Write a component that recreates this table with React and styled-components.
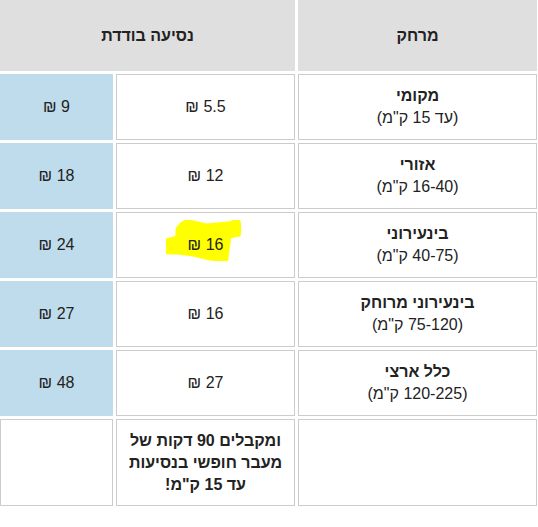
import React from "react";
import styled, { createGlobalStyle } from "styled-components";

const GlobalStyle = createGlobalStyle`
  body {
    margin: 0;
    background: #ffffff;
    font-family: "Liberation Sans", Arial, sans-serif;
    color: #222222;
  }
`;

const FareGrid = styled.div`
  direction: rtl;
  display: grid;
  width: 537px;
  grid-template-columns: 239px 179px 113px;
  grid-template-rows: 71px repeat(5, 66px) 87px;
  gap: 3px;
  font-size: 16px;
  line-height: 22px;
`;

const HeadCell = styled.div`
  grid-column: ${(props) => (props.wide ? "span 2" : "auto")};
  background: #dfdfdf;
  display: flex;
  align-items: center;
  justify-content: center;
  font-weight: bold;
`;

const Cell = styled.div`
  position: relative;
  box-sizing: border-box;
  display: flex;
  flex-direction: column;
  align-items: center;
  justify-content: center;
  text-align: center;
  padding: 0 8px;
  background: ${(props) => (props.blue ? "#bfdcec" : "#ffffff")};
  border: 1px solid ${(props) => (props.blue ? "#bfdcec" : "#cccccc")};
`;

const ZoneName = styled.span`
  font-weight: bold;
`;

const Price = styled.span`
  position: relative;
  z-index: 1;
`;

const Note = styled.span`
  font-weight: bold;
  line-height: 22px;
`;

const Marker = styled.svg`
  position: absolute;
  left: 49px;
  top: 7px;
  width: 75px;
  height: 41px;
  z-index: 0;
`;

const zones = [
  { name: "מקומי", range: "(עד 15 ק\"מ)", single: "5.5", other: "9" },
  { name: "אזורי", range: "(16-40 ק\"מ)", single: "12", other: "18" },
  { name: "בינעירוני", range: "(40-75 ק\"מ)", single: "16", other: "24", marked: true },
  { name: "בינעירוני מרוחק", range: "(75-120 ק\"מ)", single: "16", other: "27" },
  { name: "כלל ארצי", range: "(120-225 ק\"מ)", single: "27", other: "48" },
];

const App = () => {
  return (
    <>
      <GlobalStyle />
      <FareGrid>
        <HeadCell>מרחק</HeadCell>
        <HeadCell wide>נסיעה בודדת</HeadCell>
        {zones.map((z) => (
          <React.Fragment key={z.name}>
            <Cell>
              <ZoneName>{z.name}</ZoneName>
              <span>{z.range}</span>
            </Cell>
            <Cell>
              {z.marked && (
                <Marker viewBox="0 0 75 41">
                  <path
                    d="M15.7 3.3 L20.7 0.7 L30.7 2.7 L40.7 5 L64 2.7 L72.3 0 L74.7 6.7 L73.3 15 L64 16.7 L62.3 26.7 L60.7 40 L50.7 40 L40.7 38.3 L27.3 35 L14 33.3 L0.7 32.7 L0 20 L10.7 17.3 L11.3 8.3 Z"
                    fill="#ffff00"
                    stroke="#ffff00"
                    strokeWidth="3"
                    strokeLinejoin="round"
                  />
                </Marker>
              )}
              <Price>{z.single} ₪</Price>
            </Cell>
            <Cell blue>
              <Price>{z.other} ₪</Price>
            </Cell>
          </React.Fragment>
        ))}
        <Cell />
        <Cell>
          <Note>
            ומקבלים 90 דקות של
            <br />
            מעבר חופשי בנסיעות
            <br />
            עד 15 ק"מ!
          </Note>
        </Cell>
        <Cell />
      </FareGrid>
    </>
  );
};

export default App;
